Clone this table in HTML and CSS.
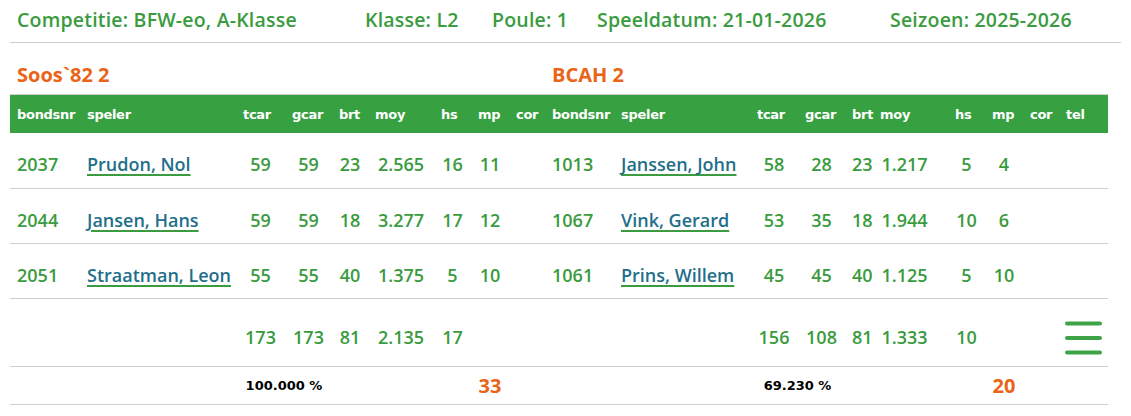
FILE: index.html
```html
<!DOCTYPE html>
<html lang="nl">
<head>
<meta charset="utf-8">
<title>Wedstrijd</title>
<link rel="stylesheet" href="styles.css">
</head>
<body>
<div class="info">
  <span class="info-item">Competitie: BFW-eo, A-Klasse</span>
  <span class="info-item">Klasse: L2</span>
  <span class="info-item">Poule: 1</span>
  <span class="info-item">Speeldatum: 21-01-2026</span>
  <span class="info-item">Seizoen: 2025-2026</span>
</div>
<table class="match">
  <colgroup>
    <col class="c-bnr-l"><col class="c-sp-l"><col class="c-tcar-l"><col class="c-gcar-l"><col class="c-brt-l"><col class="c-moy-l"><col class="c-hs-l"><col class="c-mp-l"><col class="c-cor-l">
    <col class="c-bnr-r"><col class="c-sp-r"><col class="c-tcar-r"><col class="c-gcar-r"><col class="c-brt-r"><col class="c-moy-r"><col class="c-hs-r"><col class="c-mp-r"><col class="c-cor-r"><col class="c-tel-r">
  </colgroup>
  <tr class="teams">
    <td colspan="9">Soos`82 2</td>
    <td colspan="10">BCAH 2</td>
  </tr>
  <tr class="head">
    <th>bondsnr</th><th>speler</th><th>tcar</th><th>gcar</th><th>brt</th><th>moy</th><th>hs</th><th>mp</th><th>cor</th>
    <th>bondsnr</th><th>speler</th><th>tcar</th><th>gcar</th><th>brt</th><th>moy</th><th class="hs-r">hs</th><th>mp</th><th>cor</th><th>tel</th>
  </tr>
  <tr class="row">
    <td class="l">2037</td><td class="l"><a href="#">Prudon, Nol</a></td><td>59</td><td>59</td><td>23</td><td>2.565</td><td>16</td><td>11</td><td></td>
    <td class="l">1013</td><td class="l"><a href="#">Janssen, John</a></td><td>58</td><td>28</td><td>23</td><td>1.217</td><td class="hs-r">5</td><td>4</td><td></td><td></td>
  </tr>
  <tr class="row">
    <td class="l">2044</td><td class="l"><a href="#">Jansen, Hans</a></td><td>59</td><td>59</td><td>18</td><td>3.277</td><td>17</td><td>12</td><td></td>
    <td class="l">1067</td><td class="l"><a href="#">Vink, Gerard</a></td><td>53</td><td>35</td><td>18</td><td>1.944</td><td class="hs-r">10</td><td>6</td><td></td><td></td>
  </tr>
  <tr class="row">
    <td class="l">2051</td><td class="l"><a href="#">Straatman, Leon</a></td><td>55</td><td>55</td><td>40</td><td>1.375</td><td>5</td><td>10</td><td></td>
    <td class="l">1061</td><td class="l"><a href="#">Prins, Willem</a></td><td>45</td><td>45</td><td>40</td><td>1.125</td><td class="hs-r">5</td><td>10</td><td></td><td></td>
  </tr>
  <tr class="totals">
    <td></td><td></td><td>173</td><td>173</td><td>81</td><td>2.135</td><td>17</td><td></td><td></td>
    <td></td><td></td><td>156</td><td>108</td><td>81</td><td>1.333</td><td class="hs-r">10</td><td></td><td></td>
    <td class="menu-cell">
      <svg class="menu" width="37" height="34" viewBox="0 0 37 34" aria-label="menu">
        <line x1="2" y1="2.5" x2="35" y2="2.5"/>
        <line x1="2" y1="17" x2="35" y2="17"/>
        <line x1="2" y1="31.5" x2="35" y2="31.5"/>
      </svg>
    </td>
  </tr>
  <tr class="result">
    <td></td><td></td><td colspan="2" class="pct">100.000 %</td><td></td><td></td><td></td><td class="pts">33</td><td></td>
    <td></td><td></td><td colspan="2" class="pct">69.230 %</td><td></td><td></td><td></td><td class="pts">20</td><td></td><td></td>
  </tr>
</table>
</body>
</html>
```
FILE: styles.css
```css
html, body {
  margin: 0;
  padding: 0;
  background: #ffffff;
}
body {
  margin: 0 10px;
  font-family: "Open Sans", "DejaVu Sans", sans-serif;
  color: #3a9b40;
}
.info {
  display: grid;
  grid-template-columns: 348px 127px 105px 293px 1fr;
  height: 43px;
  align-items: center;
  padding-left: 7px;
  border-bottom: 1px solid #cfcfcf;
  font-size: 19.5px;
  font-weight: 600;
  color: #3a9b40;
  box-sizing: border-box;
  letter-spacing: 0.2px;
}
.info-item {
  white-space: nowrap;
  margin-top: -3px;
}
.match {
  width: 1098px;
  table-layout: fixed;
  border-collapse: collapse;
  border-spacing: 0;
}
.c-bnr-l { width: 70px; }
.c-sp-l { width: 156px; }
.c-tcar-l { width: 49px; }
.c-gcar-l { width: 47px; }
.c-brt-l { width: 36px; }
.c-moy-l { width: 66px; }
.c-hs-l { width: 37px; }
.c-mp-l { width: 38px; }
.c-cor-l { width: 36px; }
.c-bnr-r { width: 69px; }
.c-sp-r { width: 136px; }
.c-tcar-r { width: 48px; }
.c-gcar-r { width: 47px; }
.c-brt-r { width: 28px; }
.c-moy-r { width: 63px; }
.c-hs-r { width: 49px; }
.c-mp-r { width: 38px; }
.c-cor-r { width: 36px; }
.c-tel-r { width: 49px; }

.match td, .match th {
  box-sizing: border-box;
  padding: 0 7px;
  white-space: nowrap;
  overflow: visible;
}
.match .hs-r {
  padding-left: 19px;
}
.teams td {
  height: 51px;
  vertical-align: bottom;
  padding-bottom: 6px;
  font-size: 20px;
  font-weight: 700;
  color: #ea6418;
  border-bottom: 1px solid #cfcfcf;
  line-height: 26px;
}
.head th {
  height: 39px;
  background: #37a040;
  color: #ffffff;
  font-family: "DejaVu Sans", "Open Sans", sans-serif;
  font-size: 13px;
  font-weight: 700;
  text-align: left;
  letter-spacing: -0.3px;
  padding-top: 2px;
}
.row td {
  height: 55px;
  padding-top: 8px;
  border-bottom: 1px solid #cfcfcf;
  text-align: center;
  font-size: 18px;
  font-weight: 600;
  color: #3a9b40;
}
.row td.l {
  text-align: left;
}
.row a {
  color: #1f6f8a;
  text-decoration: underline;
  text-decoration-color: #3a9b40;
  text-decoration-thickness: 2px;
  text-underline-offset: 3px;
}
.totals td {
  height: 68px;
  padding-top: 9px;
  border-bottom: 1px solid #cfcfcf;
  text-align: center;
  font-size: 18px;
  font-weight: 600;
  color: #3a9b40;
}
.totals td.menu-cell {
  padding: 11px 0 0 0;
}
.menu {
  display: block;
  margin: 0 auto;
}
.menu line {
  stroke: #3fa347;
  stroke-width: 4;
  stroke-linecap: round;
}
.result td {
  height: 38px;
  border-bottom: 1px solid #cfcfcf;
  text-align: center;
}
.result td.pct {
  font-family: "DejaVu Sans", sans-serif;
  font-size: 13px;
  font-weight: 700;
  color: #000000;
}
.result td.pts {
  font-size: 20px;
  font-weight: 700;
  color: #ea6418;
}
```
